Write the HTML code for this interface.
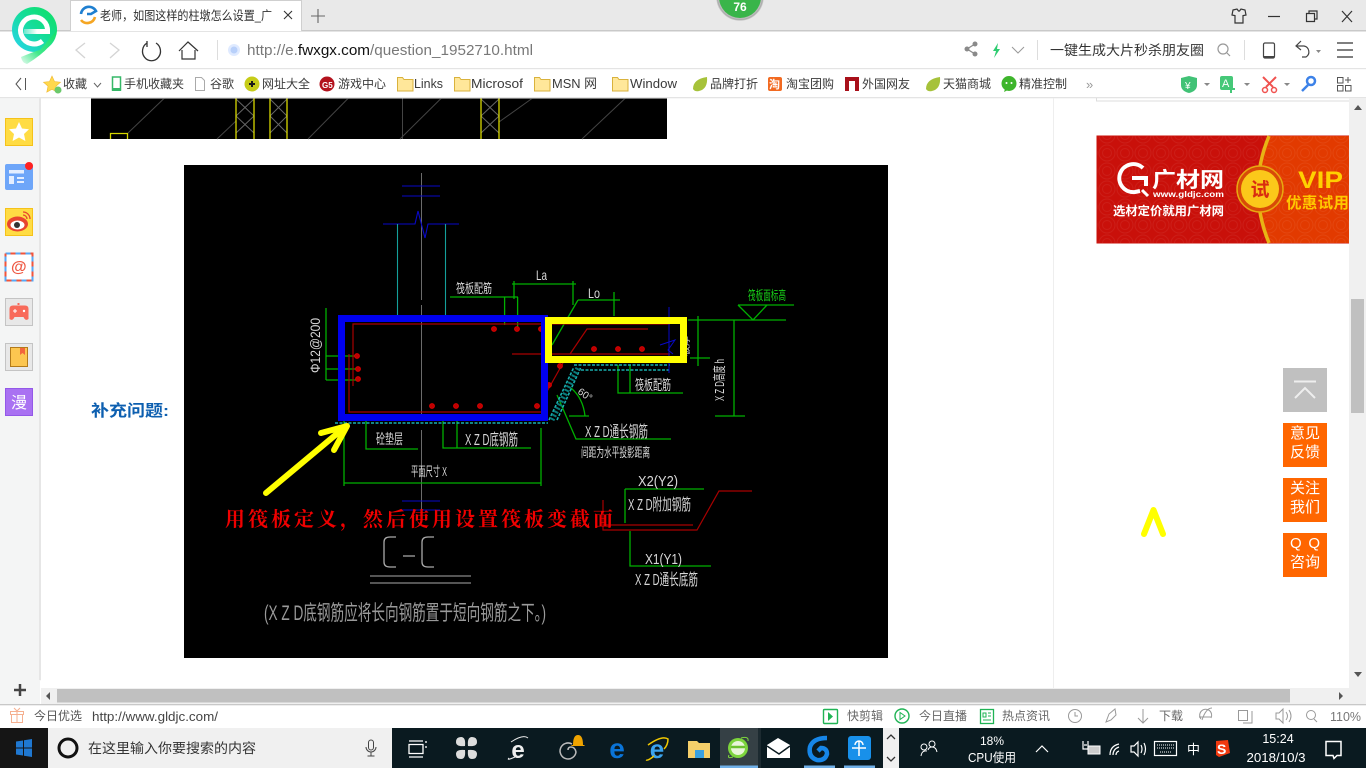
<!DOCTYPE html>
<html lang="zh"><head><meta charset="utf-8"><title>老师,如图这样的柱墩怎么设置</title>
<style>
html,body{margin:0;padding:0;width:1366px;height:768px;overflow:hidden;background:#fff}
svg{display:block;position:absolute;left:0;top:0}
text{font-family:"Liberation Sans","Noto Sans CJK SC",sans-serif;fill:#333;font-size:12px}
.b text{font-size:12px;fill:#3a3a3a}
.b text.l{font-size:13px}
.c text{fill:#d8d8d8;font-size:12px}
.g{fill:none;stroke:#00b000;stroke-width:1.3}
.r{fill:none;stroke:#a80000;stroke-width:1.2}
.i{fill:none;stroke:#555;stroke-width:1.2}
.t{fill:none;stroke:#fff;stroke-width:1.2}
</style></head><body>
<svg width="1366" height="768" viewBox="0 0 1366 768" xmlns="http://www.w3.org/2000/svg">
<defs>
<linearGradient id="lg" x1="0" y1="1" x2="1" y2="0"><stop offset="0" stop-color="#2ad4f2"/><stop offset=".55" stop-color="#14dd96"/><stop offset="1" stop-color="#0fe060"/></linearGradient>
<linearGradient id="tl" x1="1" y1="0" x2="0" y2="1"><stop offset="0" stop-color="#10e068"/><stop offset=".6" stop-color="#40e88a"/><stop offset="1" stop-color="#e6fbef"/></linearGradient>
<linearGradient id="bar" x1="0" y1="0" x2="1" y2="0"><stop offset="0" stop-color="#fff" stop-opacity=".35"/><stop offset=".5" stop-color="#fff"/></linearGradient>
<pattern id="sw" width="18" height="18" patternUnits="userSpaceOnUse"><circle cx="9" cy="9" r="8" fill="none" stroke="#fff" stroke-opacity=".06"/><circle cx="9" cy="9" r="4.5" fill="none" stroke="#fff" stroke-opacity=".06"/></pattern>
</defs>

<!-- title strip -->
<rect width="1366" height="31" fill="#e9e9e9"/>
<rect y="30" width="1366" height="1.5" fill="#c9c9c9"/>
<path d="M70.5 31V.5H301.5V31" fill="#fff" stroke="#cfcfcf"/>
<path d="M81 14a8 8 0 0 1 15-3l-5 3h-4" fill="none" stroke="#1f7fd0" stroke-width="2.6"/>
<path d="M95 17a8 8 0 0 1-14 3" fill="none" stroke="#f5a623" stroke-width="2.6"/>
<text x="100" y="20" style="font-size:12.5px" textLength="172" lengthAdjust="spacingAndGlyphs">老师&#65292;如图这样的柱墩怎么设置_广</text>
<path d="M284 11l8 8M292 11l-8 8" stroke="#333" stroke-width="1.1" fill="none"/>
<path d="M318 9v14M311 16h14" stroke="#666" stroke-width="1.1" fill="none"/>
<!-- badge -->
<circle cx="740" cy="-3" r="23" fill="#bbb"/><circle cx="740" cy="-3" r="21" fill="#39b54a"/>
<circle cx="740" cy="-3" r="23" fill="none" stroke="#888" stroke-opacity=".35" stroke-width="1.5"/>
<text x="740" y="11" text-anchor="middle" style="font-size:12px;font-weight:bold;fill:#fff">76</text>
<!-- window ctrls -->
<path d="M1233 10l4-1 1.5 2h1l1.500-2 4 1 1 5-3 .6V23h-8v-7.400l-3-.6z" class="i" style="stroke:#333"/>
<path d="M1268 16.500h12" stroke="#333" stroke-width="1.200"/>
<path d="M1306.500 13.500h8v8h-8zM1309 13.500v-2.500h8v8h-2.500" fill="none" stroke="#333" stroke-width="1.200"/>
<path d="M1342 11l10 11M1352 11l-10 11" stroke="#333" stroke-width="1.200"/>

<!-- toolbar -->
<rect y="31.500" width="1366" height="37" fill="#fff"/>
<rect y="68" width="1366" height="1.300" fill="#e4e4e4"/>
<path d="M85 43l-9 7 9 8M110 43l9 7-9 8" fill="none" stroke="#d4d4d4" stroke-width="1.300"/>
<path d="M147 43a9 9.500 0 1 0 9 0M147 41v6" fill="none" stroke="#333" stroke-width="1.300"/>
<path d="M179 51l9-9 10 9M182 50v9h13v-9" fill="none" stroke="#333" stroke-width="1.200"/>
<path d="M217.500 40v20" stroke="#ddd"/>
<circle cx="234" cy="50" r="6" fill="#dfeaff"/><circle cx="234" cy="50" r="3.500" fill="#b8d0fa"/>
<text x="247" y="55" style="font-size:14.500px;fill:#787878" textLength="286" lengthAdjust="spacingAndGlyphs">http://e.<tspan style="fill:#111">fwxgx.com</tspan>/question_1952710.html</text>
<g fill="#8a8a8a"><circle cx="967" cy="49" r="2.500"/><circle cx="975" cy="44" r="2.500"/><circle cx="975" cy="54" r="2.500"/></g>
<path d="M975 44l-8 5 8 5" fill="none" stroke="#8a8a8a" stroke-width="1.300"/>
<path d="M998 43l-5 8h3l-2 7 6-9h-3z" fill="#2ecc71"/>
<path d="M1012 47l6 6 6-6" fill="none" stroke="#999"/>
<path d="M1037.500 40v20" stroke="#ddd"/>
<text x="1050" y="55" style="font-size:13.500px;fill:#333" textLength="154" lengthAdjust="spacingAndGlyphs">一键生成大片秒杀朋友圈</text>
<circle cx="1223" cy="49" r="5" fill="none" stroke="#999" stroke-width="1.200"/><path d="M1227 53l3 3" stroke="#999" stroke-width="1.200"/>
<path d="M1244.500 40v20" stroke="#ddd"/>
<rect x="1263.500" y="43" width="11" height="15" rx="1.500" fill="none" stroke="#444" stroke-width="1.200"/><path d="M1264 56h10v2h-10z" fill="#444"/>
<path d="M1301 41l-5 5 5 4M1296 46h8a6 6 0 0 1 2 11h-4" fill="none" stroke="#444" stroke-width="1.200"/>
<path d="M1316 50h5l-2.500 3z" fill="#888"/>
<path d="M1337 43h16M1337 50h16M1337 57h16" stroke="#333" stroke-width="1.300"/>

<!-- logo -->
<circle cx="34.500" cy="29.500" r="22.500" fill="url(#lg)"/>
<path d="M57 30Q56 46 27 64Q22 63 21 57Q38 50 40 50z" fill="url(#tl)"/>
<path d="M47.500 31.500A13.500 13.500 0 1 0 42.500 41" fill="none" stroke="#fff" stroke-width="5"/>
<rect x="24" y="29" width="26" height="5" fill="url(#bar)"/>

<!-- bookmarks -->
<rect y="69.300" width="1366" height="28" fill="#fff"/>
<rect y="97" width="1366" height="1.300" fill="#e4e4e4"/>
<path d="M21 78l-5 6 5 6M25.500 78v12" fill="none" stroke="#555" stroke-width="1"/>
<path d="M52 76l2.500 5.500 6 .7-4.500 4 1.200 6-5.200-3-5.200 3 1.200-6-4.500-4 6-.7z" fill="#ffd84d" stroke="#f0b830" stroke-width=".6"/>
<circle cx="58" cy="90" r="3.500" fill="#6bc96b"/>
<g class="b">
<text x="63" y="88" textLength="24">收藏</text>
<path d="M94 83l3.500 4 3.500-4" fill="none" stroke="#666"/>
<rect x="112.500" y="77" width="8" height="13" fill="#fff" stroke="#36b868" stroke-width="1.500"/><rect x="112" y="88" width="9" height="3" fill="#36b868"/>
<text x="124" y="88" textLength="60">手机收藏夹</text>
<path d="M195.500 77.500h6l3 3v10h-9z" fill="#fff" stroke="#aaa"/>
<text x="210" y="88" textLength="24">谷歌</text>
<circle cx="252" cy="84" r="7.500" fill="#c6cc18"/><path d="M249 84h6M252 81v6" stroke="#1a1a1a" stroke-width="2"/>
<text x="262" y="88" textLength="48">网址大全</text>
<circle cx="327" cy="84" r="7.500" fill="#b3121d"/><text x="322" y="88" style="font-size:8px;fill:#fff;font-weight:bold">G5</text>
<text x="338" y="88" textLength="48">游戏中心</text>
<g fill="#ffe79a" stroke="#d9b23c"><path d="M397.500 77.500h5l1.500 2h9v11.500h-15.500z"/><path d="M454.500 77.500h5l1.500 2h9v11.500h-15.500z"/><path d="M534.500 77.500h5l1.500 2h9v11.500h-15.500z"/><path d="M612.500 77.500h5l1.500 2h9v11.500h-15.500z"/></g>
<text class="l" x="414" y="88" textLength="29" lengthAdjust="spacingAndGlyphs">Links</text>
<text class="l" x="471" y="88" textLength="52" lengthAdjust="spacingAndGlyphs">Microsof</text>
<text class="l" x="552" y="88" textLength="45" lengthAdjust="spacingAndGlyphs">MSN 网</text>
<text class="l" x="630" y="88" textLength="47" lengthAdjust="spacingAndGlyphs">Window</text>
<path d="M693 89q0-10 14-12q1 12-8 14q-4 1-6-2z" fill="#a6c23a"/>
<text x="710" y="88" textLength="48">品牌打折</text>
<rect x="768" y="77" width="14" height="14" rx="2" fill="#f26a21"/><text x="769" y="88" style="font-size:11px;fill:#fff;font-weight:bold">淘</text>
<text x="786" y="88" textLength="48">淘宝团购</text>
<path d="M845 77h14v14h-4V81h-6v10h-4z" fill="#a8101a"/>
<text x="862" y="88" textLength="48">外国网友</text>
<path d="M926 89q0-10 14-12q1 12-8 14q-4 1-6-2z" fill="#a6c23a"/>
<text x="943" y="88" textLength="48">天猫商城</text>
<circle cx="1009" cy="83.500" r="7.500" fill="#3eb52c"/><path d="M1005 89l-1 3 4-2z" fill="#3eb52c"/><circle cx="1006.500" cy="83" r="1" fill="#fff"/><circle cx="1011.500" cy="83" r="1" fill="#fff"/>
<text x="1019" y="88" textLength="48">精准控制</text>
</g>
<text x="1086" y="89" style="font-size:13px;fill:#999">»</text>
<path d="M1181 78l8-2 8 2v7q0 6-8 8q-8-2-8-8z" fill="#41c276"/><text x="1185" y="89" style="font-size:10px;fill:#fff">¥</text>
<path d="M1204 83h6l-3 3zM1244 83h6l-3 3zM1284 83h6l-3 3z" fill="#888"/>
<rect x="1220" y="76" width="13" height="14" rx="2" fill="#45c878"/><text x="1222" y="87" style="font-size:11px;fill:#fff">A</text><path d="M1231 85v8M1227 89h8" stroke="#45c878" stroke-width="2"/>
<path d="M1263 77l10 10M1276 77l-10 10" stroke="#f0524f" stroke-width="2" fill="none"/><circle cx="1265" cy="90" r="2.500" fill="none" stroke="#f0524f" stroke-width="1.500"/><circle cx="1274" cy="90" r="2.500" fill="none" stroke="#f0524f" stroke-width="1.500"/>
<circle cx="1311" cy="81" r="4" fill="none" stroke="#3d82e8" stroke-width="2.500"/><path d="M1308 85l-6 6" stroke="#3d82e8" stroke-width="2.500"/>
<path d="M1337.500 77.500h5.500v5.500h-5.500zM1337.500 85.500h5.500v5.500h-5.500zM1345.500 85.500h5.500v5.500h-5.500zM1348 77v6M1345 80h6" fill="none" stroke="#555"/>

<!-- sidebar -->
<rect y="98.300" width="40" height="606" fill="#f4f5f5"/>
<rect x="39" y="98.300" width="2" height="582" fill="#e6e6e6"/>
<rect x="5.500" y="118.500" width="27" height="27" fill="#ffdc44" stroke="#f5c21a"/>
<path d="M19 122l3 6.500 7 .8-5 4.700 1.400 7-6.400-3.500-6.400 3.500 1.400-7-5-4.700 7-.8z" fill="#fff"/>
<rect x="5" y="164" width="28" height="26" rx="2" fill="#6ea6f9"/><path d="M9 170h15v3.500H9zM9 176h5v8H9zM17 177h7v2h-7zM17 181h7v2h-7z" fill="#e4eeff"/>
<circle cx="29" cy="166" r="4" fill="#ff2222"/>
<rect x="5.500" y="208.500" width="27" height="27" fill="#ffdc44" stroke="#f5c21a"/>
<ellipse cx="17.500" cy="224" rx="10.500" ry="7.500" fill="#e8452f"/><ellipse cx="17.500" cy="225" rx="7" ry="4.500" fill="#fff"/><circle cx="17" cy="225" r="3" fill="#333"/>
<path d="M23 212a7 7 0 0 1 7 7M23 215a4 4 0 0 1 4 4" fill="none" stroke="#e8452f" stroke-width="1.300"/>
<rect x="5.500" y="253.500" width="27" height="27" fill="#fff" stroke="#55a8f5" stroke-width="2" stroke-dasharray="5 5"/>
<rect x="5.500" y="253.500" width="27" height="27" fill="none" stroke="#f2543a" stroke-width="2" stroke-dasharray="5 5" stroke-dashoffset="5"/>
<text x="11" y="272" style="font-size:16px;fill:#ee5a45;font-weight:bold">@</text>
<rect x="5.500" y="298.500" width="27" height="27" fill="#e8e8e8" stroke="#c4c4c4"/>
<path d="M9.500 309q0-3.500 3.500-3.500h12q3.500 0 3.500 3.500v10q-3 2.500-5-2h-9q-2 4.500-5 2z" fill="#f86a5a"/><path d="M18.500 305v-2" stroke="#f86a5a" stroke-width="2"/><path d="M13 311h4M15 309v4" stroke="#fff"/><circle cx="24" cy="311" r="1.200" fill="#fff"/>
<rect x="5.500" y="343.500" width="27" height="27" fill="#e8e8e8" stroke="#c4c4c4"/>
<rect x="10.500" y="347.500" width="17" height="19" fill="#fcc650" stroke="#b37b1a"/><path d="M20 348h5v7l-2.500-2-2.500 2z" fill="#f2653c"/>
<rect x="5.500" y="388.500" width="27" height="27" fill="#a971f2" stroke="#9358e8"/>
<text x="11" y="408" style="font-size:16px;fill:#fff">漫</text>

<!-- content -->
<rect x="1053" y="98" width="1" height="590" fill="#eee"/>
<path d="M1096.500 98v3h253" fill="none" stroke="#ddd"/>
<!-- top image -->
<rect x="91" y="98.500" width="576" height="40.500" fill="#000"/>
<g stroke="#444" fill="none">
<path d="M128 133L164 98.500M217 139L236 121M308 139L348 98.500M400 139L441 98.500M499 122L532 98.500M582 139L625 98.500M402.500 98.500V139"/>
<path d="M236 99l18 17-18 17M254 99l-18 17 18 17M270 99l17 17-17 17M287 99l-17 17 17 17M481 99l18 17-18 17M499 99l-18 17 18 17" stroke="#666"/>
</g>
<g stroke="#d8d800" stroke-width="1.300" fill="none"><path d="M236 98.500V139M254 98.500V139M270 98.500V139M287 98.500V139M481 98.500V139M499 98.500V139M110.500 139v-5.500h17V139"/></g>
<text x="91" y="416" style="font-size:16px;font-weight:bold;fill:#0d5fb0" textLength="78" lengthAdjust="spacingAndGlyphs">补充问题:</text>

<!-- main CAD -->
<rect x="184" y="165" width="704" height="493" fill="#000"/>
<path d="M421.500 173V300M421.500 305V420M421.500 430V512" stroke="#777" stroke-width=".9" fill="none"/>
<path d="M402 186h38M402 196h38M383 224h32l3-13 7 27 3-14h31M402 501h38M402 510h38" stroke="#0808c8" stroke-width="1.100" fill="none"/>
<path d="M397.500 224V315M445.500 224V315" stroke="#14a09a" stroke-width="1.100"/>
<path class="g" d="M450 297h68M504.600 297V325M517.600 297V330M512 284h64M514 281v18M573 281v24M578 300h42M578 300l-26 45M614 292v24M326 308V380M326 356h30M326 369h30M326 380h30"/>
<path class="g" d="M688 320h98M698 316V366M690 358h20M738 305h56M738 305l15 15 14-15M734 320V416M715 416h30M618 365v28h65M630 365v28M557 395l19 44h95M366 421v28h52M443 421v27h88M457 421v27M344 421V486M541 428V486M344 483h197M625 489h79M625 489v34M630 531v35h81"/>
<path d="M569 416h20M571 388q12 10 14 28" class="g"/>
<!-- cyan bands -->
<path d="M335 423h213M549 420l25-53M557 420l24-53M574 365h96M581 370h88" stroke="#18b0b0" stroke-width="1.600" stroke-dasharray="3 1.500" fill="none"/>
<path d="M552 420l26-52" stroke="#0a7a7a" stroke-width="5" stroke-dasharray="2 2" fill="none"/>
<!-- red -->
<path class="r" d="M349 354V412H541M353 386V324H548M512 354h36M552 324h118M552 354h118M570 354l17-25h61M545 395l18-32M752 491h-33l-22 39H603V500M603 525h90"/>
<g fill="#c00000" stroke="#e00000" stroke-width=".8"><circle cx="494" cy="329" r="2.500"/><circle cx="517" cy="329" r="2.500"/><circle cx="541" cy="329" r="2.500"/><circle cx="357" cy="356" r="2.500"/><circle cx="358" cy="369" r="2.500"/><circle cx="358" cy="379" r="2.500"/><circle cx="432" cy="406" r="2.500"/><circle cx="456" cy="406" r="2.500"/><circle cx="480" cy="406" r="2.500"/><circle cx="537" cy="406" r="2.500"/><circle cx="594" cy="349" r="2.500"/><circle cx="618" cy="349" r="2.500"/><circle cx="642" cy="349" r="2.500"/><circle cx="560" cy="366" r="2.500"/><circle cx="549" cy="385" r="2.500"/></g>
<path d="M669 307V373M660 345l15-5-7 10 5 4" stroke="#0808c8" stroke-width="1" fill="none"/>
<!-- CAD text -->
<g class="c">
<text x="456" y="293" style="font-size:13px" textLength="36" lengthAdjust="spacingAndGlyphs">筏板配筋</text>
<text x="536" y="280" style="font-size:14px" textLength="11" lengthAdjust="spacingAndGlyphs">La</text>
<text x="588" y="298" style="font-size:14px" textLength="12" lengthAdjust="spacingAndGlyphs">Lo</text>
<text transform="translate(320,373) rotate(-90)" style="font-size:14px" textLength="55" lengthAdjust="spacingAndGlyphs">Φ12@200</text>
<text x="748" y="300" style="fill:#18d018;font-size:13px" textLength="38" lengthAdjust="spacingAndGlyphs">筏板面标高</text>
<text transform="translate(724,401) rotate(-90)" style="font-size:13px" textLength="42" lengthAdjust="spacingAndGlyphs">X Z D高度 h</text>
<text transform="translate(689,356) rotate(-90)" style="font-size:10px" textLength="20" lengthAdjust="spacingAndGlyphs">板厚</text>
<text x="635" y="390" style="font-size:14px" textLength="36" lengthAdjust="spacingAndGlyphs">筏板配筋</text>
<text transform="translate(577,393) rotate(35)" style="font-size:10px">60°</text>
<text x="585" y="437" style="font-size:16px" textLength="63" lengthAdjust="spacingAndGlyphs">X Z D通长钢筋</text>
<text x="581" y="457" style="font-size:13px" textLength="69" lengthAdjust="spacingAndGlyphs">间距为水平投影距离</text>
<text x="376" y="444" style="font-size:14px" textLength="27" lengthAdjust="spacingAndGlyphs">砼垫层</text>
<text x="465" y="445" style="font-size:16px" textLength="53" lengthAdjust="spacingAndGlyphs">X Z D底钢筋</text>
<text x="411" y="476" style="font-size:13px" textLength="36" lengthAdjust="spacingAndGlyphs">平面尺寸 X</text>
<text x="638" y="486" style="font-size:15px" textLength="40" lengthAdjust="spacingAndGlyphs">X2(Y2)</text>
<text x="628" y="510" style="font-size:16px" textLength="63" lengthAdjust="spacingAndGlyphs">X Z D附加钢筋</text>
<text x="645" y="564" style="font-size:15px" textLength="37" lengthAdjust="spacingAndGlyphs">X1(Y1)</text>
<text x="635" y="585" style="font-size:16px" textLength="63" lengthAdjust="spacingAndGlyphs">X Z D通长底筋</text>
</g>
<path d="M396 537h-6q-6 0-6 5v20q0 5 6 5h6M434 537h-6q-6 0-6 5v20q0 5 6 5h6M403 556h12" stroke="#aaa" stroke-width="1.300" fill="none"/>
<path d="M370 576h101M370 583h101" stroke="#888" stroke-width="1.300"/>
<text x="264" y="620" style="font-size:21px;fill:#9a9a9a" textLength="282" lengthAdjust="spacingAndGlyphs">(X Z D底钢筋应将长向钢筋置于短向钢筋之下。)</text>
<!-- marks -->
<rect x="341.500" y="318.500" width="203" height="99" fill="none" stroke="#0000ee" stroke-width="7"/>
<rect x="548.500" y="320.500" width="135" height="39" fill="none" stroke="#ffff00" stroke-width="7"/>
<path d="M266 493L345 427M321 433l26-7-13 24" fill="none" stroke="#ffff00" stroke-width="6" stroke-linecap="round" stroke-linejoin="round"/>
<text x="225" y="526" style="font-family:'Liberation Serif','Noto Serif CJK SC',serif;font-size:20px;font-weight:bold;fill:#f00000" textLength="388">用筏板定义&#65292;然后使用设置筏板变截面</text>

<!-- banner -->
<rect x="1096.500" y="135.500" width="253" height="108" fill="#c9100a"/>
<path d="M1270 136q-24 53 0 107h79.500V136z" fill="#e23a00"/>
<rect x="1097" y="136" width="252" height="107" fill="url(#sw)"/>
<path d="M1269 136q-22 53 0 107" fill="none" stroke="#e8b414" stroke-width="3.500"/>
<circle cx="1260" cy="189" r="23" fill="#d84a08" stroke="#e8a810" stroke-width="1.500"/><circle cx="1260" cy="189" r="19" fill="#fbc81a"/>
<text x="1260" y="196" text-anchor="middle" style="font-size:19px;font-weight:bold;fill:#d92c10">试</text>
<path d="M1143 168a14 14 0 1 0-8 24l5-1M1132 178h14v8" fill="none" stroke="#fff" stroke-width="4"/><path d="M1142 190l6 6" stroke="#fff" stroke-width="3"/>
<text x="1152" y="187" style="font-size:21px;fill:#fff;font-weight:bold" textLength="72" lengthAdjust="spacingAndGlyphs">广材网</text>
<text x="1153" y="197" style="font-size:8.500px;fill:#fff;font-weight:bold" textLength="71" lengthAdjust="spacingAndGlyphs">www.gldjc.com</text>
<text x="1113" y="215" style="font-size:12px;fill:#fff;font-weight:bold" textLength="111" lengthAdjust="spacingAndGlyphs">选材定价就用广材网</text>
<text x="1298" y="188" style="font-size:24px;font-weight:bold;fill:#ffd000" textLength="45" lengthAdjust="spacingAndGlyphs">VIP</text>
<text x="1286" y="208" style="font-size:15.500px;font-weight:bold;fill:#ffc800" textLength="63">优惠试用</text>

<!-- floats -->
<rect x="1283" y="368" width="44" height="44" fill="#c0c0c0"/>
<path d="M1294 381.500h22M1295 398l10-10 10 10" fill="none" stroke="#eee" stroke-width="2"/>
<g fill="#ff6600"><rect x="1283" y="423" width="44" height="44"/><rect x="1283" y="478" width="44" height="44"/><rect x="1283" y="533" width="44" height="44"/></g>
<g><text x="1305" y="438" text-anchor="middle" style="font-size:15px;fill:#fff">意见</text><text x="1305" y="457" text-anchor="middle" style="font-size:15px;fill:#fff">反馈</text>
<text x="1305" y="493" text-anchor="middle" style="font-size:15px;fill:#fff">关注</text><text x="1305" y="512" text-anchor="middle" style="font-size:15px;fill:#fff">我们</text>
<text x="1305" y="548" text-anchor="middle" style="font-size:15px;fill:#fff" textLength="30">Q Q</text><text x="1305" y="567" text-anchor="middle" style="font-size:15px;fill:#fff">咨询</text></g>
<path d="M1144 534L1153.500 510L1163 534" fill="none" stroke="#ffff00" stroke-width="6" stroke-linecap="round" stroke-linejoin="round"/>

<!-- v scrollbar -->
<rect x="1349" y="98.300" width="17" height="606" fill="#f0f0f0"/>
<path d="M1354 110h8l-4-5z" fill="#555"/>
<path d="M1354 672h8l-4 5z" fill="#555"/>
<rect x="1351" y="299" width="13" height="114" fill="#c0c0c0"/>
<!-- h scrollbar -->
<rect x="41" y="688" width="1308" height="16" fill="#f0f0f0"/>
<rect x="57" y="689" width="1233" height="13.500" fill="#c0c0c0"/>
<path d="M50 692v8l-4-4zM1339 692v8l4-4z" fill="#555"/>
<rect x="1349" y="688" width="17" height="16" fill="#f0f0f0"/>
<rect x="0" y="680" width="40" height="24" fill="#f4f5f5"/>
<path d="M20 684v12M14 690h12" stroke="#444" stroke-width="2.500"/>

<!-- status -->
<rect y="704" width="1366" height="24" fill="#fff"/>
<rect y="704" width="1366" height="1.300" fill="#c8c8c8"/>
<path d="M10.500 711.500h13v3h-13zM11.500 714.500h11v8h-11zM17 711.500v11M14 708l3 3 3-3" fill="none" stroke="#f5b090"/>
<text x="34" y="720" textLength="48" lengthAdjust="spacingAndGlyphs" style="font-size:12px;fill:#555">今日优选</text>
<text x="92" y="721" textLength="126" lengthAdjust="spacingAndGlyphs" style="font-size:12.500px;fill:#444">http://www.gldjc.com/</text>
<rect x="823.500" y="709.500" width="14" height="14" rx="1" fill="none" stroke="#1fb354" stroke-width="1.400"/><path d="M828 712v9l5-4.500z" fill="#1fb354"/>
<text x="847" y="720" textLength="36" lengthAdjust="spacingAndGlyphs" style="font-size:12px;fill:#666">快剪辑</text>
<circle cx="902" cy="716" r="7" fill="none" stroke="#1fb354" stroke-width="1.400"/><path d="M900 712.500v7l5-3.500z" fill="none" stroke="#1fb354"/>
<text x="919" y="720" textLength="48" lengthAdjust="spacingAndGlyphs" style="font-size:12px;fill:#666">今日直播</text>
<rect x="980.500" y="709.500" width="13" height="14" fill="none" stroke="#1fb354" stroke-width="1.300"/><path d="M983 713h3v4h-3zM988 713h3M988 716h3M983 720h8" fill="none" stroke="#1fb354"/>
<text x="1002" y="720" textLength="48" lengthAdjust="spacingAndGlyphs" style="font-size:12px;fill:#666">热点资讯</text>
<g fill="none" stroke="#999" stroke-width="1"><circle cx="1075" cy="716" r="6.500"/><path d="M1075 712v4h3"/><path d="M1106 722l3-8 6-5 1 6-5 5z"/><path d="M1143 709v14M1138 718l5 5 5-5"/><path d="M1201 719a6 6 0 1 1 10-1M1199 717h12M1212 708q-6 0-10 12"/><rect x="1238.500" y="710.500" width="9" height="10"/><path d="M1243 723h9v-12"/><path d="M1276 713h3l4-4v14l-4-4h-3zM1286 712q3 4 0 8M1289 710q4 6 0 12"/><circle cx="1311" cy="715" r="4.500"/><path d="M1314 719l3 3"/></g>
<text x="1159" y="720" textLength="24" lengthAdjust="spacingAndGlyphs" style="font-size:12px;fill:#666">下载</text>
<text x="1330" y="721" textLength="31" lengthAdjust="spacingAndGlyphs" style="font-size:12.500px;fill:#777">110%</text>

<!-- taskbar -->
<rect y="728" width="1366" height="40" fill="#0a1a20"/>
<rect y="728" width="48" height="40" fill="#151515"/>
<path d="M16 741.500l7-1v7h-7zM24 740.300l8-1.300v8.500h-8zM16 748.500h7v7l-7-1zM24 748.500h8v8.500l-8-1.300z" fill="#1f78d1"/>
<rect x="48" y="728" width="344" height="40" fill="#f0f0f0"/>
<circle cx="68" cy="748" r="9" fill="none" stroke="#111" stroke-width="3"/>
<text x="88" y="753" textLength="168" lengthAdjust="spacingAndGlyphs" style="font-size:13.500px;fill:#333">在这里输入你要搜索的内容</text>
<rect x="368.500" y="740" width="5" height="10" rx="2.500" fill="none" stroke="#444"/><path d="M366 747a5 5 0 0 0 10 0M371 752v4M367.500 756h7" fill="none" stroke="#444"/>
<path d="M409 741h14M409 744.500h14v9h-14zM409 757h14M426 741v2M426 746v2" fill="none" stroke="#fff" stroke-width="1.300"/>
<path d="M465 746q-9 1-9-4t5-5q5 0 4 9zM468 746q-1-9 4-9t5 5q0 5-9 4zM465 750q-9-1-9 4t5 5q5 0 4-9zM468 750q-1 9 4 9t5-5q0-5-9-4z" fill="#ddd"/>
<text x="518" y="758" text-anchor="middle" style="font-size:24px;fill:#eee;font-weight:bold">e</text><path d="M509 758q-3 3 6-1M511 742q12-8 17-4" stroke="#eee" fill="none"/>
<path d="M572 744a8 8 0 1 0 4 8q-1-5-5-5-3 0-3 3" fill="none" stroke="#bbb" stroke-width="1.500"/>
<path d="M573 745q0-10 5-10t5 10h1.500v1h-13v-1z" fill="#f0a400"/>
<text x="617" y="758" text-anchor="middle" style="font-size:28px;font-weight:bold;fill:#0a74d8">e</text>
<text x="657" y="758" text-anchor="middle" style="font-size:26px;font-weight:bold;fill:#3ba4ee">e</text><path d="M646 760q2 1 8-4M648 745q14-10 20-6 0 6-4 10" fill="none" stroke="#f0c800" stroke-width="1.500"/>
<path d="M688 741h9l2 2h11v15h-22z" fill="#f5cf6a"/><rect x="695" y="750" width="9" height="8" fill="#3aa0e0"/>
<rect x="720" y="728" width="38" height="40" fill="#354045"/><rect x="758" y="728" width="3" height="40" fill="#1c2a30"/>
<rect x="720" y="765.500" width="38" height="2.500" fill="#70b0e8"/><rect x="804" y="765.500" width="31" height="2.500" fill="#70b0e8"/><rect x="844" y="765.500" width="31" height="2.500" fill="#70b0e8"/>
<circle cx="738" cy="748" r="10" fill="#7cd43c"/><circle cx="738" cy="748" r="7" fill="#e8f5d8"/><path d="M731 747h14" stroke="#6cc030" stroke-width="2.500"/><path d="M729 755q-2 4 4 2M741 738q8-2 7 3" fill="none" stroke="#7cd43c"/>
<path d="M767 745l11-7 12 7v13h-23z" fill="#fff"/><path d="M767 746l12 8 11-8" fill="none" stroke="#0a1a20" stroke-width="1.500"/>
<path d="M827 738q-14 0-17 9-2 10 7 13 8 1 10-6 0-6-6-6l-3 3" fill="none" stroke="#1686e8" stroke-width="4.500"/>
<rect x="848" y="736" width="23" height="24" rx="3" fill="#1890ea"/><path d="M859 741v15M852 748h14M855 745a4 4 0 0 1 8 0" fill="none" stroke="#fff" stroke-width="1.500"/>
<rect x="883" y="728" width="16" height="40" fill="#f0f0f0"/>
<path d="M887 739l4-4 4 4M887 757l4 4 4-4" fill="none" stroke="#333" stroke-width="1.300"/>
<circle cx="932" cy="744" r="3" fill="none" stroke="#fff"/><circle cx="924" cy="747" r="3" fill="none" stroke="#fff"/><path d="M921 756q1-6 6-5M928 750q1-3 4-3 4 0 5 5" fill="none" stroke="#fff"/>
<text x="992" y="745" text-anchor="middle" style="font-size:12px;fill:#fff">18%</text>
<text x="992" y="762" text-anchor="middle" textLength="48" lengthAdjust="spacingAndGlyphs" style="font-size:12.500px;fill:#fff">CPU使用</text>
<path d="M1036 752l6-6 6 6" class="t"/>
<path d="M1084 745h3M1083 741v4M1088 741v4M1083 745v4h5v-4" class="t"/><rect x="1088" y="746" width="12" height="8" fill="#ccc" stroke="#fff"/>
<path d="M1110 755q0-9 9-11M1113 755q0-6 6-8M1116 755q0-3 3-4" class="t"/>
<path d="M1131 746h3l4-4v14l-4-4h-3zM1141 745q2 4 0 8M1144 743q3 6 0 12" class="t"/>
<rect x="1154.500" y="741.500" width="22" height="14" class="t"/><path d="M1157 745h17M1157 748h17M1160 752h11" stroke="#fff" stroke-dasharray="1 1"/>
<text x="1187" y="754" style="font-size:13px;fill:#fff">中</text>
<path d="M1216 741l12-1 2 13-11 4-3-2z" fill="#f03a10"/><text x="1217" y="754" style="font-size:14px;font-weight:bold;fill:#fff">S</text>
<text x="1278" y="743" text-anchor="middle" style="font-size:12.500px;fill:#fff">15:24</text>
<text x="1276" y="762" text-anchor="middle" textLength="59" lengthAdjust="spacingAndGlyphs" style="font-size:12.500px;fill:#fff">2018/10/3</text>
<path d="M1326 741.500h15v14h-4l-3 3-1-3h-7z" class="t" style="stroke-width:1.500"/>
</svg>
</body></html>
